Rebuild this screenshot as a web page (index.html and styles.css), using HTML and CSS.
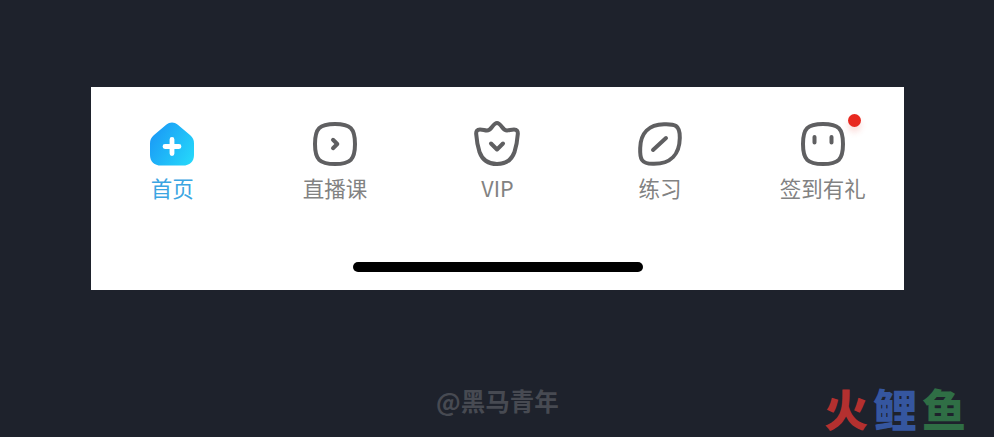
FILE: index.html
```html
<!DOCTYPE html>
<html lang="zh-CN">
<head>
<meta charset="utf-8">
<title>底部导航</title>
<link rel="stylesheet" href="styles.css">
</head>
<body>
<main class="stage">
  <nav class="tabbar">
    <ul class="tabs">
      <li class="tab tab-active">
        <svg class="icon" viewBox="0 0 44 44" aria-hidden="true">
          <defs>
            <linearGradient id="homeFill" x1="0" y1="0.2" x2="1" y2="0.8">
              <stop offset="0" stop-color="#1a98f6"/>
              <stop offset="1" stop-color="#25d6fa"/>
            </linearGradient>
          </defs>
          <path fill="url(#homeFill)" d="M16.500 2.500C19.500 -0.300 24.500 -0.300 27.500 2.500L40 13C43 15.500 44 18 44 21.500V33C44 39.600 39.600 43.600 33 43.600H11C4.400 43.600 0 39.600 0 33V21.500C0 18 1 15.500 4 13Z"/>
          <path class="plus" d="M22 17.500V31.500M15 24.500H29"/>
        </svg>
        <span class="label">首页</span>
      </li>
      <li class="tab">
        <svg class="icon" viewBox="0 0 44 44" aria-hidden="true">
          <path class="line" d="M22 2C37.500 2 42 6.500 42 22C42 37.500 37.500 42 22 42C6.500 42 2 37.500 2 22C2 6.500 6.500 2 22 2Z"/>
          <path class="line" d="M20 17.800L24.300 22L20 26.200"/>
        </svg>
        <span class="label">直播课</span>
      </li>
      <li class="tab">
        <svg class="icon" viewBox="0 0 44 44" aria-hidden="true">
          <path class="line" d="M22 1C24 1 25.500 3 27 5C28.500 7 30 8.500 32 8.500C34.500 8.500 36 7.500 39 7.500C42 7.500 43 9.500 42.800 12C42.400 17.500 41.500 24 39.500 30C36.500 38.500 31 42 22 42C13 42 7.500 38.500 4.500 30C2.500 24 1.600 17.500 1.200 12C1 9.500 2 7.500 5 7.500C8 7.500 9.500 8.500 12 8.500C14 8.500 15.500 7 17 5C18.500 3 20 1 22 1Z"/>
          <path class="line" d="M16 21.500L22 27.500L28 21.500"/>
        </svg>
        <span class="label">VIP</span>
      </li>
      <li class="tab">
        <svg class="icon" viewBox="0 0 44 44" aria-hidden="true">
          <path class="line" d="M26 2.200C31 2 35 2 38 4C41 6 42 10 41.800 16C41.500 32 33 41.800 16 41.800C10 42 6 41 4 38C2 35 2 31 2.200 26C2.500 11 11 2.500 26 2.200Z"/>
          <path class="line" d="M15 28L28 16"/>
        </svg>
        <span class="label">练习</span>
      </li>
      <li class="tab">
        <span class="icon-wrap">
          <svg class="icon" viewBox="0 0 44 44" aria-hidden="true">
            <path class="line" d="M22 2C37.500 2 42 6.500 42 22C42 37.500 37.500 42 22 42C6.500 42 2 37.500 2 22C2 6.500 6.500 2 22 2Z"/>
            <path class="line" d="M13.500 15V20.500M30.500 15V20.500"/>
          </svg>
          <span class="badge"></span>
        </span>
        <span class="label">签到有礼</span>
      </li>
    </ul>
    <div class="home-indicator"></div>
  </nav>
</main>
<footer class="marks">
  <span class="author">@黑马青年</span>
  <span class="brand"><span class="brand-red">火</span><span class="brand-blue">鲤</span><span class="brand-green">鱼</span></span>
</footer>
</body>
</html>
```

FILE: styles.css
```css
* {
  box-sizing: border-box;
}

html,
body {
  margin: 0;
  height: 437px;
  overflow: hidden;
}

body {
  background: #1e222c;
  font-family: "Noto Sans CJK SC", "Noto Sans", sans-serif;
  position: relative;
}

.stage {
  padding: 87px 90px 0 91px;
}

.tabbar {
  width: 813px;
  height: 203px;
  background: #fff;
  display: flex;
  flex-direction: column;
  align-items: center;
}

.tabs {
  list-style: none;
  margin: 0;
  padding: 35px 0 0;
  width: 100%;
  display: grid;
  grid-template-columns: repeat(5, 1fr);
}

.tab {
  display: flex;
  flex-direction: column;
  align-items: center;
  color: #828282;
}

.tab-active {
  color: #3ba5e2;
}

.icon {
  display: block;
  width: 44px;
  height: 44px;
  overflow: visible;
}

.icon-wrap {
  position: relative;
  display: block;
}

.line {
  fill: none;
  stroke: #5f5f61;
  stroke-width: 4;
  stroke-linecap: round;
  stroke-linejoin: round;
}

.plus {
  fill: none;
  stroke: #fff;
  stroke-width: 4.8;
  stroke-linecap: round;
}

.badge {
  position: absolute;
  top: -8px;
  right: -16px;
  width: 13px;
  height: 13px;
  border-radius: 50%;
  background: #e8281f;
  box-shadow: 0 5px 6px rgba(232, 60, 50, 0.18);
}

.label {
  margin-top: 7px;
  font-size: 21.5px;
  line-height: 30px;
  white-space: nowrap;
}

.home-indicator {
  margin-top: auto;
  margin-bottom: 18px;
  width: 290px;
  height: 10px;
  border-radius: 5px;
  background: #000;
}

.marks .author {
  position: absolute;
  left: 436px;
  top: 383px;
  font-size: 24.5px;
  line-height: 35px;
  font-weight: 700;
  color: #474a52;
  white-space: nowrap;
}

.marks .brand {
  position: absolute;
  left: 824px;
  top: 388px;
  font-family: "Liberation Sans", "Noto Sans CJK SC", sans-serif;
  font-size: 44px;
  line-height: 48px;
  letter-spacing: 5px;
  font-weight: 900;
  white-space: nowrap;
}

.brand-red {
  color: #b4302f;
}

.brand-blue {
  color: #35569f;
}

.brand-green {
  color: #2f6e45;
}
```
